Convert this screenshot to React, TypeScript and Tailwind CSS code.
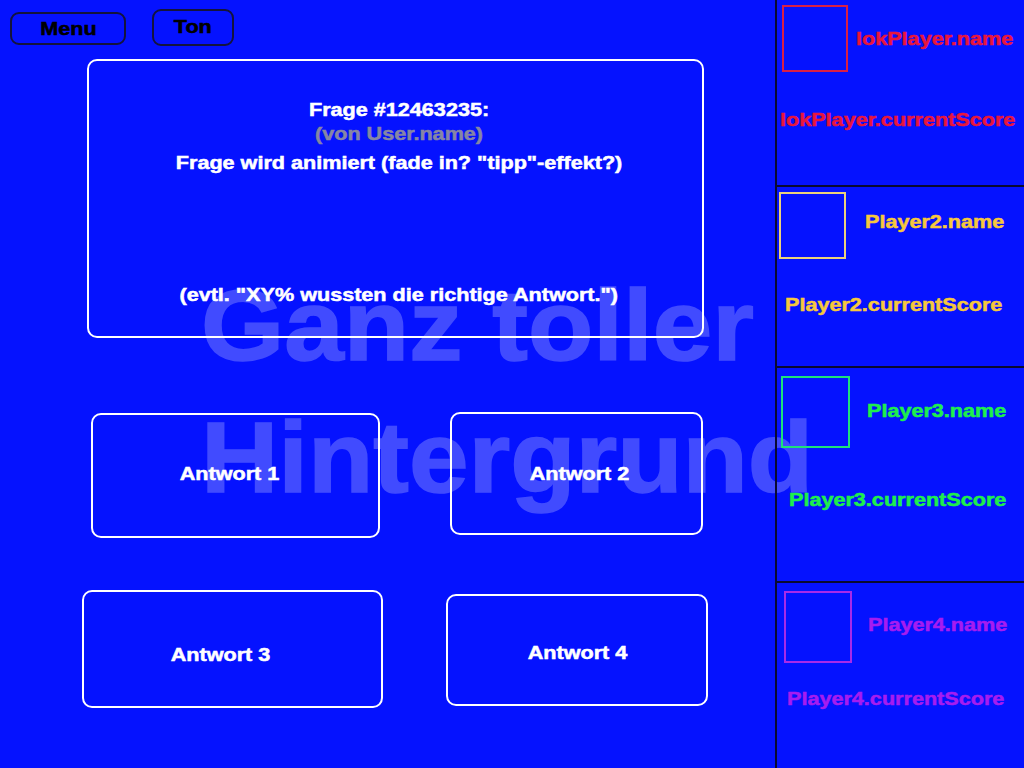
import React from "react";

const font = { fontFamily: '"Liberation Sans", Arial, sans-serif' };

function Answer({ label, className, textClass }: { label: string; className: string; textClass?: string }) {
  return (
    <div className={"shrink-0 rounded-[10px] border-2 border-white flex items-center justify-center " + className}>
      <span className={"inline-block scale-x-[1.2] text-white text-[18px] font-bold leading-[22px] [-webkit-text-stroke:0.5px_white] " + (textClass || "")}>{label}</span>
    </div>
  );
}

type P = {
  name: string;
  score: string;
  color: string;
  boxColor: string;
  sec: string;
  box: string;
  nameCls: string;
  scoreCls: string;
};

function Player({ p }: { p: P }) {
  return (
    <div className={"flex flex-col shrink-0 " + p.sec}>
      <div className="flex items-center">
        <div className={"shrink-0 border-2 " + p.box} style={{ borderColor: p.boxColor }} />
        <span
          className={"inline-block origin-left scale-x-[1.2] text-[18px] font-bold leading-[22px] whitespace-nowrap " + p.nameCls}
          style={{ color: p.color, WebkitTextStroke: `0.5px ${p.color}` }}
        >
          {p.name}
        </span>
      </div>
      <span
        className={"self-start inline-block origin-left scale-x-[1.2] text-[18px] font-bold leading-[22px] whitespace-nowrap " + p.scoreCls}
        style={{ color: p.color, WebkitTextStroke: `0.5px ${p.color}` }}
      >
        {p.score}
      </span>
    </div>
  );
}

export default function App() {
  const players: P[] = [
    {
      name: "lokPlayer.name",
      score: "lokPlayer.currentScore",
      color: "#e8163c",
      boxColor: "#d81f45",
      sec: "h-[187px] border-b-2 border-[#0a0a30]",
      box: "mt-[5px] ml-[5px] w-[66px] h-[67px]",
      nameCls: "ml-[8px] mt-[5px]",
      scoreCls: "mt-[37px] ml-[3px]",
    },
    {
      name: "Player2.name",
      score: "Player2.currentScore",
      color: "#f6c83c",
      boxColor: "#ecd27c",
      sec: "h-[181px] border-b-2 border-[#0a0a30]",
      box: "mt-[5px] ml-[2px] w-[67px] h-[67px]",
      nameCls: "ml-[19px] mt-[-2px]",
      scoreCls: "mt-[35px] ml-[8px]",
    },
    {
      name: "Player3.name",
      score: "Player3.currentScore",
      color: "#1fee4c",
      boxColor: "#1ee07a",
      sec: "h-[215px] border-b-2 border-[#0a0a30]",
      box: "mt-[8px] ml-[4px] w-[69px] h-[72px]",
      nameCls: "ml-[17px] mt-[5px]",
      scoreCls: "mt-[41px] ml-[12px]",
    },
    {
      name: "Player4.name",
      score: "Player4.currentScore",
      color: "#a61cf0",
      boxColor: "#a82ae8",
      sec: "flex-1",
      box: "mt-[8px] ml-[7px] w-[68px] h-[72px]",
      nameCls: "ml-[16px] mt-[4px]",
      scoreCls: "mt-[25px] ml-[10px]",
    },
  ];

  return (
    <div className="relative w-[1024px] h-[768px] overflow-hidden bg-[#0512ff] flex" style={font}>
      {/* watermark */}
      <div className="absolute left-[201px] top-[259px] pointer-events-none select-none origin-left scale-x-[1.07] text-[100px] leading-[132px] font-bold text-white opacity-[0.24] [-webkit-text-stroke:1.5px_white] whitespace-nowrap z-0">
        <div>Ganz toller</div>
        <div>Hintergrund</div>
      </div>

      {/* main */}
      <div className="relative z-10 w-[775px] shrink-0 flex flex-col">
        <div className="flex items-start">
          <div className="ml-[10px] mt-[12px] w-[116px] h-[33px] rounded-[9px] border-2 border-[#14143c] flex items-center justify-center">
            <span className="inline-block scale-x-[1.2] text-black text-[18px] font-bold leading-[22px] [-webkit-text-stroke:0.5px_black]">Menu</span>
          </div>
          <div className="ml-[26px] mt-[9px] w-[82px] h-[37px] rounded-[9px] border-2 border-[#14143c] flex items-center justify-center">
            <span className="inline-block scale-x-[1.2] text-black text-[18px] font-bold leading-[22px] [-webkit-text-stroke:0.5px_black] mt-[-1px]">Ton</span>
          </div>
        </div>

        <div className="mt-[13px] ml-[87px] w-[617px] h-[279px] rounded-[10px] border-2 border-white flex flex-col items-center pl-[7px] text-[18px] font-bold leading-[22px] [-webkit-text-stroke:0.5px_currentColor]">
          <div className="mt-[38px] text-white scale-x-[1.2] whitespace-nowrap">Frage #12463235:</div>
          <div className="mt-[2px] text-[#8686a4] scale-x-[1.2] whitespace-nowrap">(von User.name)</div>
          <div className="mt-[7px] text-white scale-x-[1.2] whitespace-nowrap">Frage wird animiert (fade in? "tipp"-effekt?)</div>
          <div className="mt-[110px] text-white scale-x-[1.2] whitespace-nowrap">(evtl. "XY% wussten die richtige Antwort.")</div>
        </div>

        <div className="flex items-start mt-[74px]">
          <Answer label="Antwort 1" className="mt-[1px] ml-[91px] w-[289px] h-[125px]" textClass="mr-[12px] mt-[-4px]" />
          <Answer label="Antwort 2" className="ml-[70px] w-[253px] h-[123px]" textClass="ml-[6px] mt-[1px]" />
        </div>

        <div className="flex items-start mt-[52px]">
          <Answer label="Antwort 3" className="ml-[82px] w-[301px] h-[118px]" textClass="mr-[24px] mt-[11px]" />
          <Answer label="Antwort 4" className="mt-[4px] ml-[63px] w-[262px] h-[112px]" textClass="mt-[5px]" />
        </div>
      </div>

      {/* sidebar */}
      <div className="relative z-10 flex-1 border-l-2 border-[#0a0a30] flex flex-col">
        {players.map((p) => (
          <Player key={p.name} p={p} />
        ))}
      </div>
    </div>
  );
}
